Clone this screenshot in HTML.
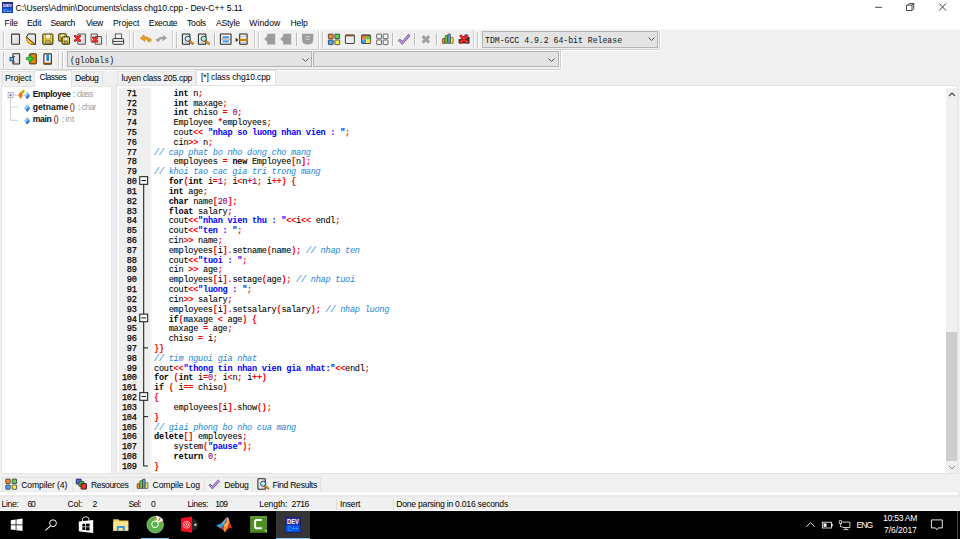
<!DOCTYPE html>
<html><head><meta charset="utf-8"><title>Dev-C++</title>
<style>
html,body{margin:0;padding:0}
body{width:960px;height:539px;position:relative;overflow:hidden;background:#f0f0f0;font-family:"Liberation Sans",sans-serif}
.t{position:absolute;white-space:pre;margin:0;padding:0}
.b{position:absolute;box-sizing:border-box}
.m{font-family:"Liberation Mono",monospace}
svg{position:absolute;overflow:visible}
.cl{position:absolute;left:154px;white-space:pre;font-family:"Liberation Mono",monospace;font-size:8.6px;letter-spacing:-0.26px;height:9.817px;line-height:9.817px;color:#000;-webkit-text-stroke:0.08px #000}
.ln{position:absolute;left:119px;width:17.6px;text-align:right;white-space:pre;font-family:"Liberation Mono",monospace;font-size:8.6px;letter-spacing:-0.26px;height:9.817px;line-height:9.817px;color:#000;-webkit-text-stroke:0.25px #000}
.k{font-weight:bold;-webkit-text-stroke:0}
.s{color:#ff0000;font-weight:bold;-webkit-text-stroke:0}
.q{color:#0000ff;font-weight:bold;-webkit-text-stroke:0}
.n{color:#800080;-webkit-text-stroke:0.08px #800080}
.c{color:#1a86e0;font-style:italic;-webkit-text-stroke:0}
</style></head><body>
<div class="b" style="left:0px;top:0px;width:960px;height:28.5px;background:#ffffff;"></div>
<svg style="left:1.5px;top:2px" width="11" height="11" viewBox="0 0 11 11"><rect width="11" height="11" fill="#1a1f6a"/><rect x="0.5" y="0.5" width="10" height="5" fill="#2a3596"/><rect x="0.5" y="5.5" width="10" height="5" fill="#0a58e0"/><text x="5.5" y="4.6" font-family="Liberation Sans, sans-serif" font-weight="bold" font-size="4.4" fill="#fff" text-anchor="middle">DEV</text><text x="5.5" y="9.6" font-family="Liberation Sans, sans-serif" font-weight="bold" font-size="4.4" fill="#8fd0ff" text-anchor="middle">C++</text></svg>
<div class="t " style="left:15.60px;top:3px;font-size:8.6px;color:#000;letter-spacing:-0.065px;">C:\Users\Admin\Documents\class chg10.cpp - Dev-C++ 5.11</div>
<svg style="left:870px;top:0" width="90" height="16" viewBox="0 0 90 16"><path d="M5.1 7.3h7" stroke="#1a1a1a" stroke-width="0.8" fill="none"/><path d="M36.5 5.2h5.5v5.300h-5.500zM37.900 5.200l1.300-1.700h4.500v5.300l-1.700 1.700M43.700 3.500l-1.700 1.700" stroke="#1a1a1a" stroke-width="0.8" fill="none"/><path d="M69.100 3.300l7 7.400M76.100 3.300l-7 7.400" stroke="#1a1a1a" stroke-width="0.8" fill="none"/></svg>
<div class="t " style="left:4.60px;top:18px;font-size:8.6px;color:#000;letter-spacing:-0.119px;">File</div>
<div class="t " style="left:27.10px;top:18px;font-size:8.6px;color:#000;letter-spacing:-0.207px;">Edit</div>
<div class="t " style="left:50.60px;top:18px;font-size:8.6px;color:#000;letter-spacing:-0.510px;">Search</div>
<div class="t " style="left:85.90px;top:18px;font-size:8.6px;color:#000;letter-spacing:-0.362px;">View</div>
<div class="t " style="left:112.90px;top:18px;font-size:8.6px;color:#000;letter-spacing:-0.028px;">Project</div>
<div class="t " style="left:148.80px;top:18px;font-size:8.6px;color:#000;letter-spacing:-0.396px;">Execute</div>
<div class="t " style="left:187.10px;top:18px;font-size:8.6px;color:#000;letter-spacing:-0.269px;">Tools</div>
<div class="t " style="left:215.90px;top:18px;font-size:8.6px;color:#000;letter-spacing:-0.151px;">AStyle</div>
<div class="t " style="left:249.30px;top:18px;font-size:8.6px;color:#000;letter-spacing:0.082px;">Window</div>
<div class="t " style="left:290.40px;top:18px;font-size:8.6px;color:#000;letter-spacing:-0.096px;">Help</div>
<div class="b" style="left:0px;top:28.5px;width:960px;height:1.2px;background:#f8f8f8;"></div>
<div class="b" style="left:0px;top:48.5px;width:659px;height:1px;background:#d0d0d0;"></div>
<div class="b" style="left:0px;top:49.5px;width:659px;height:1px;background:#ffffff;"></div>
<div class="b" style="left:0px;top:68.5px;width:560px;height:1px;background:#d0d0d0;"></div>
<div class="b" style="left:0px;top:69.5px;width:560px;height:1px;background:#ffffff;"></div>
<div class="b" style="left:3px;top:31.5px;width:1px;height:16.5px;background:#c4c4c4;"></div>
<div class="b" style="left:4px;top:31.5px;width:1px;height:16.5px;background:#ffffff;"></div>
<div class="b" style="left:133px;top:31.5px;width:1px;height:16.5px;background:#c4c4c4;"></div>
<div class="b" style="left:134px;top:31.5px;width:1px;height:16.5px;background:#ffffff;"></div>
<div class="b" style="left:175.5px;top:31.5px;width:1px;height:16.5px;background:#c4c4c4;"></div>
<div class="b" style="left:176.5px;top:31.5px;width:1px;height:16.5px;background:#ffffff;"></div>
<div class="b" style="left:258px;top:31.5px;width:1px;height:16.5px;background:#c4c4c4;"></div>
<div class="b" style="left:259px;top:31.5px;width:1px;height:16.5px;background:#ffffff;"></div>
<div class="b" style="left:322px;top:31.5px;width:1px;height:16.5px;background:#c4c4c4;"></div>
<div class="b" style="left:323px;top:31.5px;width:1px;height:16.5px;background:#ffffff;"></div>
<div class="b" style="left:477px;top:31.5px;width:1px;height:16.5px;background:#c4c4c4;"></div>
<div class="b" style="left:478px;top:31.5px;width:1px;height:16.5px;background:#ffffff;"></div>
<div class="b" style="left:129px;top:29.5px;width:1px;height:19px;background:#d0d0d0;"></div>
<div class="b" style="left:130px;top:29.5px;width:1px;height:19px;background:#ffffff;"></div>
<div class="b" style="left:171.5px;top:29.5px;width:1px;height:19px;background:#d0d0d0;"></div>
<div class="b" style="left:172.5px;top:29.5px;width:1px;height:19px;background:#ffffff;"></div>
<div class="b" style="left:253.5px;top:29.5px;width:1px;height:19px;background:#d0d0d0;"></div>
<div class="b" style="left:254.5px;top:29.5px;width:1px;height:19px;background:#ffffff;"></div>
<div class="b" style="left:318px;top:29.5px;width:1px;height:19px;background:#d0d0d0;"></div>
<div class="b" style="left:319px;top:29.5px;width:1px;height:19px;background:#ffffff;"></div>
<div class="b" style="left:473px;top:29.5px;width:1px;height:19px;background:#d0d0d0;"></div>
<div class="b" style="left:474px;top:29.5px;width:1px;height:19px;background:#ffffff;"></div>
<div class="b" style="left:659px;top:29.5px;width:1px;height:19px;background:#d0d0d0;"></div>
<div class="b" style="left:660px;top:29.5px;width:1px;height:19px;background:#ffffff;"></div>
<div class="b" style="left:106px;top:33px;width:1px;height:13px;background:#b8b8b8;"></div>
<div class="b" style="left:107px;top:33px;width:1px;height:13px;background:#ffffff;"></div>
<div class="b" style="left:214px;top:33px;width:1px;height:13px;background:#b8b8b8;"></div>
<div class="b" style="left:215px;top:33px;width:1px;height:13px;background:#ffffff;"></div>
<div class="b" style="left:296.3px;top:33px;width:1px;height:13px;background:#b8b8b8;"></div>
<div class="b" style="left:297.3px;top:33px;width:1px;height:13px;background:#ffffff;"></div>
<div class="b" style="left:392.3px;top:33px;width:1px;height:13px;background:#b8b8b8;"></div>
<div class="b" style="left:393.3px;top:33px;width:1px;height:13px;background:#ffffff;"></div>
<div class="b" style="left:414.4px;top:33px;width:1px;height:13px;background:#b8b8b8;"></div>
<div class="b" style="left:415.4px;top:33px;width:1px;height:13px;background:#ffffff;"></div>
<div class="b" style="left:436px;top:33px;width:1px;height:13px;background:#b8b8b8;"></div>
<div class="b" style="left:437px;top:33px;width:1px;height:13px;background:#ffffff;"></div>
<div class="b" style="left:3px;top:51.5px;width:1px;height:16.5px;background:#c4c4c4;"></div>
<div class="b" style="left:4px;top:51.5px;width:1px;height:16.5px;background:#ffffff;"></div>
<div class="b" style="left:62.3px;top:51.5px;width:1px;height:16.5px;background:#c4c4c4;"></div>
<div class="b" style="left:63.3px;top:51.5px;width:1px;height:16.5px;background:#ffffff;"></div>
<div class="b" style="left:58px;top:49.5px;width:1px;height:19px;background:#d0d0d0;"></div>
<div class="b" style="left:59px;top:49.5px;width:1px;height:19px;background:#ffffff;"></div>
<div class="b" style="left:560px;top:49.5px;width:1px;height:19px;background:#d0d0d0;"></div>
<div class="b" style="left:561px;top:49.5px;width:1px;height:19px;background:#ffffff;"></div>
<svg style="left:0;top:28px" width="480" height="42" viewBox="0 28 480 42"><defs><linearGradient id="pg" x1="0" y1="0" x2="1" y2="1"><stop offset="0" stop-color="#f4f4f4"/><stop offset="1" stop-color="#d6d6d6"/></linearGradient><linearGradient id="yl" x1="0" y1="0" x2="0" y2="1"><stop offset="0" stop-color="#fff04a"/><stop offset="1" stop-color="#d8b400"/></linearGradient></defs><rect x="11.6" y="34.1" width="7.9" height="10.2" rx="0.5" fill="url(#pg)" stroke="#363636" stroke-width="1.05"/><path d="M28 34h7.500v10.400h-4.500l-4.600-6.800z" fill="url(#pg)" stroke="#2a2a2a" stroke-width="1"/><path d="M26.300 37q-1 7.800 8.600 7.600z" fill="#f6a81c" stroke="#b8720c" stroke-width="0.5"/><path d="M27.800 39.500q0.600 3.600 4.400 4.200z" fill="#ffd84a"/><path d="M26.400 36.900l8.700 7.500" stroke="#262626" stroke-width="0.9"/><rect x="42.8" y="34.1" width="10.1" height="10.2" rx="0.5" fill="url(#yl)" stroke="#2e2600" stroke-width="1"/><rect x="45.53" y="34.6" width="4.65" height="4.28" fill="#f4f4f4" stroke="#6a5a10" stroke-width="0.4"/><rect x="45.83" y="40.83" width="4.44" height="3.07" fill="#a8a8a8" stroke="#4a3c00" stroke-width="0.4"/><rect x="58.7" y="33.8" width="7.6" height="7.3" rx="0.5" fill="url(#yl)" stroke="#2e2600" stroke-width="1"/><rect x="60.75" y="34.3" width="3.50" height="3.07" fill="#f4f4f4" stroke="#6a5a10" stroke-width="0.4"/><rect x="60.98" y="38.62" width="3.34" height="2.08" fill="#a8a8a8" stroke="#4a3c00" stroke-width="0.4"/><rect x="62.1" y="36.8" width="7.4" height="7.4" rx="0.5" fill="url(#yl)" stroke="#2e2600" stroke-width="1"/><rect x="64.10" y="37.3" width="3.40" height="3.11" fill="#f4f4f4" stroke="#6a5a10" stroke-width="0.4"/><rect x="64.32" y="41.68" width="3.26" height="2.12" fill="#a8a8a8" stroke="#4a3c00" stroke-width="0.4"/><rect x="77.8" y="33.9" width="7.6" height="10.3" rx="0.5" fill="url(#pg)" stroke="#5a5a5a" stroke-width="1.05"/><path d="M75.2 36.1L79.8 40.699999999999996M79.8 36.1L75.2 40.699999999999996" stroke="#8a0a0a" stroke-width="2.4" stroke-linecap="round"/><path d="M75.2 36.1L79.8 40.699999999999996M79.8 36.1L75.2 40.699999999999996" stroke="#ff2a2a" stroke-width="1.7" stroke-linecap="round"/><rect x="91.1" y="33.9" width="6.3" height="8" rx="0.5" fill="url(#pg)" stroke="#5a5a5a" stroke-width="1.05"/><rect x="95.2" y="36.4" width="6.4" height="7.8" rx="0.5" fill="url(#pg)" stroke="#5a5a5a" stroke-width="1.05"/><path d="M93.19999999999999 37.6L97.0 41.4M97.0 37.6L93.19999999999999 41.4" stroke="#8a0a0a" stroke-width="2.3" stroke-linecap="round"/><path d="M93.19999999999999 37.6L97.0 41.4M97.0 37.6L93.19999999999999 41.4" stroke="#ff2a2a" stroke-width="1.6" stroke-linecap="round"/><rect x="115.3" y="33.9" width="6.2" height="5" fill="#f2f2f2" stroke="#3a3a3a" stroke-width="0.8"/><rect x="112.8" y="38.6" width="10.8" height="5.7" rx="0.8" fill="#f6f6f6" stroke="#2e2e2e" stroke-width="1"/><path d="M113 41.4h10.4" stroke="#2e2e2e" stroke-width="0.9"/><path d="M140.2 38.2l3.6-3.2l0.7 1.9q3-0.3 4.6 1.6q2.2-0.2 2.2 1.5q0 1.7-2.1 1.7q-1.7 0-2-1.7q-1-1.2-2.6-0.9l0.4 2.2z" fill="#f2a21a" stroke="#a86208" stroke-width="0.5"/><path d="M167 38.2l-3.6-3.2l-0.7 1.9q-3-0.3-4.6 1.6q-2.2-0.2-2.2 1.5q0 1.7 2.1 1.7q1.700 0 2-1.700q1-1.200 2.600-0.900l-0.400 2.200z" fill="#a2a2a2"/><rect x="182.4" y="33.9" width="7.4" height="10.4" rx="0.5" fill="url(#pg)" stroke="#262626" stroke-width="1.05"/><path d="M189.2 40.6l3.6 3" stroke="#7a4a00" stroke-width="2.1" stroke-linecap="round"/><path d="M189.4 40.8l3.3 2.7" stroke="#f0a020" stroke-width="1.1" stroke-linecap="round"/><circle cx="187.7" cy="38.8" r="2.6" fill="#bfeeff" stroke="#1e2e48" stroke-width="0.9"/><rect x="198.4" y="33.9" width="7.4" height="10.4" rx="0.5" fill="url(#pg)" stroke="#262626" stroke-width="1.05"/><path d="M205.2 40.6l3.6 3" stroke="#7a4a00" stroke-width="2.1" stroke-linecap="round"/><path d="M205.4 40.8l3.3 2.7" stroke="#f0a020" stroke-width="1.1" stroke-linecap="round"/><circle cx="203.7" cy="38.8" r="2.6" fill="#aef2cf" stroke="#1e2e48" stroke-width="0.9"/><rect x="220.4" y="33.9" width="10.6" height="10.4" rx="0.6" fill="#f4f4f4" stroke="#222" stroke-width="1.05"/><path d="M220.4 39.1h10.6" stroke="#555" stroke-width="0.5"/><rect x="222.6" y="36.2" width="6.3" height="2.1" fill="#4a98ec"/><rect x="222.6" y="40.3" width="6.3" height="2.1" fill="#4a98ec"/><rect x="239.7" y="33.9" width="7.4" height="10.4" rx="0.6" fill="#f8f8f8" stroke="#222" stroke-width="1.05"/><path d="M239.7 36.6h7.4M239.7 42.6h7.4" stroke="#777" stroke-width="0.4"/><rect x="239.4" y="38.7" width="8.1" height="2.4" fill="#c8860a"/><path d="M235.700 37.700l2.800 2.200l-2.800 2.200z" fill="#3a2a10"/><path d="M264.2 39l3-3v-2.300h8v10.800h-8v-2.500z" fill="#9c9c9c"/><path d="M280.2 39l3-3v-2.300h8v10.800h-8v-2.500z" fill="#9c9c9c"/><path d="M302 33.700h11.300v5.500q0 5.300-5.650 5.300q-5.650 0-5.650-5.300z" fill="#9c9c9c"/><path d="M305.600 36.700h4.400M305.600 39.200h4.400" stroke="#d4d4d4" stroke-width="1"/><rect x="328.4" y="34.1" width="4.8" height="4.6" rx="0.5" fill="#f58a2a" stroke="#333" stroke-width="0.8"/><rect x="334.9" y="34.1" width="4.8" height="4.6" rx="0.5" fill="#5cd04a" stroke="#333" stroke-width="0.8"/><rect x="328.4" y="40" width="4.8" height="4.6" rx="0.5" fill="#4aa2f4" stroke="#333" stroke-width="0.8"/><rect x="334.9" y="40" width="4.8" height="4.6" rx="0.5" fill="#f4ee4a" stroke="#333" stroke-width="0.8"/><rect x="345.4" y="34.900" width="9" height="8.600" rx="0.5" fill="#ececec" stroke="#2e2e2e" stroke-width="0.9"/><path d="M345.400 35.700h9" stroke="#8a4a12" stroke-width="1.300"/><rect x="361.6" y="34.900" width="9" height="8.600" rx="0.5" fill="#eee" stroke="#2e2e2e" stroke-width="0.9"/><rect x="362" y="36.300" width="4.100" height="3.300" fill="#f5822a"/><rect x="366.100" y="36.300" width="4.100" height="3.300" fill="#52c84a"/><rect x="362" y="39.600" width="4.100" height="3.500" fill="#3e9af2"/><rect x="366.100" y="39.600" width="4.100" height="3.500" fill="#f2ea42"/><path d="M361.600 35.700h9" stroke="#8a4a12" stroke-width="1.300"/><rect x="376.7" y="34.1" width="4.8" height="4.6" rx="0.5" fill="#f2f2f2" stroke="#444" stroke-width="0.8"/><rect x="383.2" y="34.1" width="4.8" height="4.6" rx="0.5" fill="#f2f2f2" stroke="#444" stroke-width="0.8"/><rect x="376.7" y="40" width="4.8" height="4.6" rx="0.5" fill="#f2f2f2" stroke="#444" stroke-width="0.8"/><rect x="383.2" y="40" width="4.8" height="4.6" rx="0.5" fill="#f2f2f2" stroke="#444" stroke-width="0.8"/><path d="M398.90 39.70l3.30 3.30l7.30 -8.10" fill="none" stroke="#4a3470" stroke-width="2.50" stroke-linejoin="miter"/><path d="M398.90 39.70l3.30 3.30l7.30 -8.10" fill="none" stroke="#c9a4f6" stroke-width="1.30" stroke-linejoin="miter"/><path d="M422.600 36.200l6.600 6.400M429.200 36.200l-6.600 6.400" stroke="#a2a2a2" stroke-width="3.100"/><rect x="442.40" y="38.50" width="2.700" height="4.90" rx="0.6" fill="#f58a2a" stroke="#3a2a10" stroke-width="0.6"/><rect x="445.10" y="35.60" width="2.700" height="7.80" rx="0.6" fill="#5cd04a" stroke="#3a2a10" stroke-width="0.6"/><rect x="447.80" y="34.00" width="2.700" height="9.40" rx="0.6" fill="#4aa2f4" stroke="#3a2a10" stroke-width="0.6"/><rect x="450.50" y="37.50" width="2.700" height="5.90" rx="0.6" fill="#f4e84a" stroke="#3a2a10" stroke-width="0.6"/><path d="M458.600 43.400v-4.500h2.500v-2.600h3.400v-1.800h2.600v2.600h2.500v6.300z" fill="#3a3a3a"/><path d="M460.9 36.0L467.1 42.2M467.1 36.0L460.9 42.2" stroke="#8a0a0a" stroke-width="2.8" stroke-linecap="round"/><path d="M460.9 36.0L467.1 42.2M467.1 36.0L460.9 42.2" stroke="#ff2a2a" stroke-width="2.1" stroke-linecap="round"/><rect x="12.9" y="53.8" width="6.7" height="10.1" rx="0.5" fill="url(#pg)" stroke="#262626" stroke-width="1.05"/><path d="M12.900 56.500h2.200M12.900 62h2.200" stroke="#3a3a3a" stroke-width="0.8"/><rect x="10" y="57.400" width="3.700" height="3.500" fill="#6ab2f6" stroke="#1a3a6a" stroke-width="0.8"/><rect x="29.600" y="53.800" width="6.700" height="10.100" rx="0.5" fill="#dc8a0a" stroke="#4a2a00" stroke-width="1"/><path d="M27.300 58.600h5.200M29.900 56.200v4.800" stroke="#0a6a0a" stroke-width="2.900" stroke-linecap="round"/><path d="M27.400 58.600h5M29.900 56.300v4.600" stroke="#36e036" stroke-width="1.600" stroke-linecap="round"/><rect x="43.900" y="53.800" width="7.500" height="10.300" rx="0.6" fill="#fafafa" stroke="#5a340a" stroke-width="1.200"/><path d="M43.900 63.300h7.500" stroke="#8a5210" stroke-width="1.500"/><rect x="46.300" y="54.300" width="2.900" height="6.700" fill="#1a88e0"/></svg>
<div class="b" style="left:482px;top:31px;width:176px;height:16.5px;background:#e3e3e3;border:1px solid #b4b4b4;"></div>
<svg style="left:647.5px;top:37.45px" width="7" height="4" viewBox="0 0 7 4"><path d="M0.5 0.5l3 3l3-3" stroke="#444" stroke-width="0.9" fill="none"/></svg>
<div class="t m" style="left:485px;top:35.85px;font-size:8.17px;line-height:10px;color:#161616;">TDM-GCC 4.9.2 64-bit Release</div>
<div class="b" style="left:67px;top:51.3px;width:245px;height:16px;background:#e3e3e3;border:1px solid #b4b4b4;"></div>
<svg style="left:301.5px;top:57.5px" width="7" height="4" viewBox="0 0 7 4"><path d="M0.5 0.5l3 3l3-3" stroke="#444" stroke-width="0.9" fill="none"/></svg>
<div class="t m" style="left:70px;top:55.90px;font-size:8.17px;line-height:10px;color:#161616;">(globals)</div>
<div class="b" style="left:312.8px;top:51.3px;width:245.8px;height:16px;background:#e3e3e3;border:1px solid #b4b4b4;"></div>
<svg style="left:548.1px;top:57.5px" width="7" height="4" viewBox="0 0 7 4"><path d="M0.5 0.5l3 3l3-3" stroke="#444" stroke-width="0.9" fill="none"/></svg>
<div class="b" style="left:1px;top:85.6px;width:111.3px;height:388.6px;background:#ffffff;border:1px solid #e6e6e6;"></div>
<div class="b" style="left:1.5px;top:70.9px;width:33.4px;height:15px;background:#f0f0f0;border:1px solid #e2e2e2;border-bottom:none;"></div>
<div class="b" style="left:71px;top:70.9px;width:32px;height:15px;background:#f0f0f0;border:1px solid #e2e2e2;border-bottom:none;"></div>
<div class="b" style="left:34.4px;top:69.6px;width:37.2px;height:17px;background:#ffffff;border:1px solid #e2e2e2;border-bottom:none;"></div>
<div class="t " style="left:5.10px;top:73px;font-size:8.6px;color:#000;letter-spacing:-0.094px;">Project</div>
<div class="t " style="left:39.60px;top:72px;font-size:8.6px;color:#000;letter-spacing:-0.565px;">Classes</div>
<div class="t " style="left:75.10px;top:73px;font-size:8.6px;color:#000;letter-spacing:-0.411px;">Debug</div>
<svg style="left:0;top:84px" width="112" height="50" viewBox="0 0 112 50"><g stroke="#bcbcbc" stroke-width="0.7" fill="none"><path d="M10.6 13.8v22.5"/><path d="M10.6 23.1h7.5"/><path d="M10.6 36.3h7.5"/><path d="M13.1 11.1h5"/></g><rect x="8.1" y="8.5" width="5" height="5.3" fill="#fff" stroke="#9a9a9a" stroke-width="0.7"/><path d="M9.3 11.15h2.6M10.6 9.8v2.7" stroke="#3a5fa8" stroke-width="0.8"/><path d="M20.6 7.5l2.5 3.7l-2.5 3.8l-2.5-3.8z" fill="#f07a1a"/><path d="M23.1 5l2.5 2.8l-2.5 2.8l-2.5-2.8z" fill="#f4e53a"/><path d="M21.7 9.3l2.2-2.8" stroke="#333" stroke-width="0.8"/><path d="M27.2 7.9l2.900 3.600l-2.900 3.600l-2.900-3.600z" fill="#4a9af4"/><path d="M27.2 7.9l-2.900 3.600l1.300 1.600l3.300-4.100z" fill="#9ad0fc"/><path d="M30.099999999999998 11.5l-2.900 3.600l-1.400-1.700z" fill="#1a62d0"/><path d="M27.2 20.5l2.900 3.600l-2.900 3.600l-2.900-3.600z" fill="#4a9af4"/><path d="M27.2 20.5l-2.900 3.600l1.300 1.600l3.300-4.100z" fill="#9ad0fc"/><path d="M30.099999999999998 24.1l-2.900 3.600l-1.400-1.700z" fill="#1a62d0"/><path d="M27.2 33.1l2.900 3.600l-2.900 3.600l-2.900-3.600z" fill="#4a9af4"/><path d="M27.2 33.1l-2.900 3.600l1.300 1.600l3.300-4.100z" fill="#9ad0fc"/><path d="M30.099999999999998 36.7l-2.900 3.600l-1.400-1.700z" fill="#1a62d0"/></svg>
<div class="t " style="left:32.70px;top:89px;font-size:8.6px;color:#111;letter-spacing:-0.347px;font-weight:bold;">Employee</div>
<div class="t " style="left:72.70px;top:89px;font-size:8.6px;color:#8a8a8a;">:</div>
<div class="t " style="left:76.85px;top:89px;font-size:8.6px;color:#a0a0a0;letter-spacing:-0.773px;">class</div>
<div class="t " style="left:32.70px;top:102px;font-size:8.6px;color:#111;letter-spacing:0.056px;font-weight:bold;">getname</div>
<div class="t " style="left:69.50px;top:102px;font-size:9px;color:#7a1010;letter-spacing:-0.395px;">()</div>
<div class="t " style="left:78.10px;top:102px;font-size:8.6px;color:#8a8a8a;">:</div>
<div class="t " style="left:81.50px;top:102px;font-size:8.6px;color:#a0a0a0;letter-spacing:-0.577px;">char</div>
<div class="t " style="left:32.70px;top:114px;font-size:8.6px;color:#111;letter-spacing:-0.324px;font-weight:bold;">main</div>
<div class="t " style="left:53.50px;top:114px;font-size:9px;color:#7a1010;letter-spacing:-0.695px;">()</div>
<div class="t " style="left:61.70px;top:114px;font-size:8.6px;color:#8a8a8a;">:</div>
<div class="t " style="left:65.20px;top:114px;font-size:8.6px;color:#a0a0a0;letter-spacing:0.008px;">int</div>
<div class="b" style="left:112.3px;top:85px;width:4px;height:389.5px;background:#ececec;"></div>
<div class="b" style="left:117.4px;top:71px;width:78.6px;height:14.6px;background:#f0f0f0;border:1px solid #e2e2e2;border-bottom:none;"></div>
<div class="b" style="left:195.8px;top:69.6px;width:80.4px;height:17px;background:#ffffff;border:1px solid #e2e2e2;border-bottom:none;"></div>
<div class="t " style="left:121.50px;top:73px;font-size:8.6px;color:#000;letter-spacing:-0.263px;">luyen class 205.cpp</div>
<div class="t " style="left:201.10px;top:72px;font-size:8.6px;color:#000;letter-spacing:-0.144px;">[*] class chg10.cpp</div>
<div class="b" style="left:116.3px;top:85.4px;width:842.2px;height:389px;background:#ffffff;border:1px solid #e4e4e4;"></div>
<div class="b" style="left:118.9px;top:87.9px;width:33.4px;height:385px;background:linear-gradient(to right,#efefef 0,#efefef 31px,#ffffff 33.4px);"></div>
<div class="ln" style="top:89.75px">71</div><div class="cl" style="top:89.75px">    <span class="k">int</span> n<span class="s">;</span></div>
<div class="ln" style="top:99.57px">72</div><div class="cl" style="top:99.57px">    <span class="k">int</span> maxage<span class="s">;</span></div>
<div class="ln" style="top:109.38px">73</div><div class="cl" style="top:109.38px">    <span class="k">int</span> chiso <span class="s">=</span> <span class="n">0</span><span class="s">;</span></div>
<div class="ln" style="top:119.20px">74</div><div class="cl" style="top:119.20px">    Employee <span class="s">*</span>employees<span class="s">;</span></div>
<div class="ln" style="top:129.02px">75</div><div class="cl" style="top:129.02px">    cout<span class="s">&lt;</span><span class="s">&lt;</span> <span class="q">&quot;nhap so luong nhan vien : &quot;</span><span class="s">;</span></div>
<div class="ln" style="top:138.84px">76</div><div class="cl" style="top:138.84px">    cin<span class="s">&gt;</span><span class="s">&gt;</span> n<span class="s">;</span></div>
<div class="ln" style="top:148.65px">77</div><div class="cl" style="top:148.65px"><span class="c">// cap phat bo nho dong cho mang</span></div>
<div class="ln" style="top:158.47px">78</div><div class="cl" style="top:158.47px">    employees <span class="s">=</span> <span class="k">new</span> Employee<span class="s">[</span>n<span class="s">]</span><span class="s">;</span></div>
<div class="ln" style="top:168.29px">79</div><div class="cl" style="top:168.29px"><span class="c">// khoi tao cac gia tri trong mang</span></div>
<div class="ln" style="top:178.10px">80</div><div class="cl" style="top:178.10px">   <span class="k">for</span><span class="s">(</span><span class="k">int</span> i<span class="s">=</span><span class="n">1</span><span class="s">;</span> i<span class="s">&lt;</span>n<span class="s">+</span><span class="n">1</span><span class="s">;</span> i<span class="s">+</span><span class="s">+</span><span class="s">)</span> <span class="s">{</span></div>
<div class="ln" style="top:187.92px">81</div><div class="cl" style="top:187.92px">   <span class="k">int</span> age<span class="s">;</span></div>
<div class="ln" style="top:197.74px">82</div><div class="cl" style="top:197.74px">   <span class="k">char</span> name<span class="s">[</span><span class="n">20</span><span class="s">]</span><span class="s">;</span></div>
<div class="ln" style="top:207.55px">83</div><div class="cl" style="top:207.55px">   <span class="k">float</span> salary<span class="s">;</span></div>
<div class="ln" style="top:217.37px">84</div><div class="cl" style="top:217.37px">   cout<span class="s">&lt;</span><span class="s">&lt;</span><span class="q">&quot;nhan vien thu : &quot;</span><span class="s">&lt;</span><span class="s">&lt;</span>i<span class="s">&lt;</span><span class="s">&lt;</span> endl<span class="s">;</span></div>
<div class="ln" style="top:227.19px">85</div><div class="cl" style="top:227.19px">   cout<span class="s">&lt;</span><span class="s">&lt;</span><span class="q">&quot;ten : &quot;</span><span class="s">;</span></div>
<div class="ln" style="top:237.00px">86</div><div class="cl" style="top:237.00px">   cin<span class="s">&gt;</span><span class="s">&gt;</span> name<span class="s">;</span></div>
<div class="ln" style="top:246.82px">87</div><div class="cl" style="top:246.82px">   employees<span class="s">[</span>i<span class="s">]</span><span class="s">.</span>setname<span class="s">(</span>name<span class="s">)</span><span class="s">;</span> <span class="c">// nhap ten</span></div>
<div class="ln" style="top:256.64px">88</div><div class="cl" style="top:256.64px">   cout<span class="s">&lt;</span><span class="s">&lt;</span><span class="q">&quot;tuoi : &quot;</span><span class="s">;</span></div>
<div class="ln" style="top:266.46px">89</div><div class="cl" style="top:266.46px">   cin <span class="s">&gt;</span><span class="s">&gt;</span> age<span class="s">;</span></div>
<div class="ln" style="top:276.27px">90</div><div class="cl" style="top:276.27px">   employees<span class="s">[</span>i<span class="s">]</span><span class="s">.</span>setage<span class="s">(</span>age<span class="s">)</span><span class="s">;</span> <span class="c">// nhap tuoi</span></div>
<div class="ln" style="top:286.09px">91</div><div class="cl" style="top:286.09px">   cout<span class="s">&lt;</span><span class="s">&lt;</span><span class="q">&quot;luong : &quot;</span><span class="s">;</span></div>
<div class="ln" style="top:295.91px">92</div><div class="cl" style="top:295.91px">   cin<span class="s">&gt;</span><span class="s">&gt;</span> salary<span class="s">;</span></div>
<div class="ln" style="top:305.72px">93</div><div class="cl" style="top:305.72px">   employees<span class="s">[</span>i<span class="s">]</span><span class="s">.</span>setsalary<span class="s">(</span>salary<span class="s">)</span><span class="s">;</span> <span class="c">// nhap luong</span></div>
<div class="ln" style="top:315.54px">94</div><div class="cl" style="top:315.54px">   <span class="k">if</span><span class="s">(</span>maxage <span class="s">&lt;</span> age<span class="s">)</span> <span class="s">{</span></div>
<div class="ln" style="top:325.36px">95</div><div class="cl" style="top:325.36px">   maxage <span class="s">=</span> age<span class="s">;</span></div>
<div class="ln" style="top:335.18px">96</div><div class="cl" style="top:335.18px">   chiso <span class="s">=</span> i<span class="s">;</span></div>
<div class="ln" style="top:344.99px">97</div><div class="cl" style="top:344.99px"><span class="s">}</span><span class="s">}</span></div>
<div class="ln" style="top:354.81px">98</div><div class="cl" style="top:354.81px"><span class="c">// tim nguoi gia nhat</span></div>
<div class="ln" style="top:364.63px">99</div><div class="cl" style="top:364.63px">cout<span class="s">&lt;</span><span class="s">&lt;</span><span class="q">&quot;thong tin nhan vien gia nhat:&quot;</span><span class="s">&lt;</span><span class="s">&lt;</span>endl<span class="s">;</span></div>
<div class="ln" style="top:374.44px">100</div><div class="cl" style="top:374.44px"><span class="k">for</span> <span class="s">(</span><span class="k">int</span> i<span class="s">=</span><span class="n">0</span><span class="s">;</span> i<span class="s">&lt;</span>n<span class="s">;</span> i<span class="s">+</span><span class="s">+</span><span class="s">)</span></div>
<div class="ln" style="top:384.26px">101</div><div class="cl" style="top:384.26px"><span class="k">if</span> <span class="s">(</span> i<span class="s">=</span><span class="s">=</span> chiso<span class="s">)</span></div>
<div class="ln" style="top:394.08px">102</div><div class="cl" style="top:394.08px"><span class="s">{</span></div>
<div class="ln" style="top:403.89px">103</div><div class="cl" style="top:403.89px">    employees<span class="s">[</span>i<span class="s">]</span><span class="s">.</span>show<span class="s">(</span><span class="s">)</span><span class="s">;</span></div>
<div class="ln" style="top:413.71px">104</div><div class="cl" style="top:413.71px"><span class="s">}</span></div>
<div class="ln" style="top:423.53px">105</div><div class="cl" style="top:423.53px"><span class="c">// giai phong bo nho cua mang</span></div>
<div class="ln" style="top:433.35px">106</div><div class="cl" style="top:433.35px"><span class="k">delete</span><span class="s">[</span><span class="s">]</span> employees<span class="s">;</span></div>
<div class="ln" style="top:443.16px">107</div><div class="cl" style="top:443.16px">    system<span class="s">(</span><span class="q">&quot;pause&quot;</span><span class="s">)</span><span class="s">;</span></div>
<div class="ln" style="top:452.98px">108</div><div class="cl" style="top:452.98px">    <span class="k">return</span> <span class="n">0</span><span class="s">;</span></div>
<div class="ln" style="top:462.80px">109</div><div class="cl" style="top:462.80px"><span class="s">}</span></div>
<svg style="left:0;top:0" width="160" height="480" viewBox="0 0 160 480"><g stroke="#1c1c1c" stroke-width="1.05" fill="none"><path d="M143.7 180.50V466.00h4.2"/><path d="M143.7 347.89h4.3"/><path d="M143.7 416.61h4.3"/><rect x="139.75" y="176.70" width="7.9" height="7.6" fill="#fff"/><path d="M141.4 180.50h4.6"/><rect x="139.75" y="314.14" width="7.9" height="7.6" fill="#fff"/><path d="M141.4 317.94h4.6"/><rect x="139.75" y="392.68" width="7.9" height="7.6" fill="#fff"/><path d="M141.4 396.48h4.6"/></g></svg>
<div class="b" style="left:945.7px;top:88px;width:11.3px;height:384.6px;background:#f0f0f0;"></div>
<div class="b" style="left:946px;top:332px;width:10.6px;height:129px;background:#cdcdcd;"></div>
<svg style="left:947.5px;top:92px" width="8" height="5" viewBox="0 0 8 5"><path d="M1 4l3-3l3 3" stroke="#404040" stroke-width="1.1" fill="none"/></svg>
<svg style="left:947.5px;top:465px" width="8" height="5" viewBox="0 0 8 5"><path d="M1 1l3 3l3-3" stroke="#808080" stroke-width="0.9" fill="none"/></svg>
<div class="b" style="left:1.5px;top:477.2px;width:71.0px;height:14.5px;background:#f0f0f0;border:1px solid #e3e3e3;border-bottom:none;"></div>
<div class="b" style="left:71.5px;top:477.2px;width:62.30000000000001px;height:14.5px;background:#f0f0f0;border:1px solid #e3e3e3;border-bottom:none;"></div>
<div class="b" style="left:132.8px;top:477.2px;width:72.19999999999999px;height:14.5px;background:#f0f0f0;border:1px solid #e3e3e3;border-bottom:none;"></div>
<div class="b" style="left:204px;top:477.2px;width:49.19999999999999px;height:14.5px;background:#f0f0f0;border:1px solid #e3e3e3;border-bottom:none;"></div>
<div class="b" style="left:252.2px;top:477.2px;width:68.60000000000002px;height:14.5px;background:#f0f0f0;border:1px solid #e3e3e3;border-bottom:none;"></div>
<div class="t " style="left:21.20px;top:480px;font-size:8.6px;color:#000;letter-spacing:-0.101px;">Compiler (4)</div>
<div class="t " style="left:91.10px;top:480px;font-size:8.6px;color:#000;letter-spacing:-0.426px;">Resources</div>
<div class="t " style="left:152.50px;top:480px;font-size:8.6px;color:#000;letter-spacing:-0.078px;">Compile Log</div>
<div class="t " style="left:224.20px;top:480px;font-size:8.6px;color:#000;letter-spacing:-0.186px;">Debug</div>
<div class="t " style="left:272.40px;top:480px;font-size:8.6px;color:#000;letter-spacing:-0.263px;">Find Results</div>
<svg style="left:0;top:474px" width="330" height="20" viewBox="0 474 330 20"><rect x="5.8" y="479.1" width="4.4" height="4.4" rx="0.5" fill="#f58a2a" stroke="#333" stroke-width="0.8"/><rect x="12.2" y="479.1" width="4.4" height="4.4" rx="0.5" fill="#5cd04a" stroke="#333" stroke-width="0.8"/><rect x="5.8" y="485" width="4.4" height="4.3" rx="0.5" fill="#4aa2f4" stroke="#333" stroke-width="0.8"/><rect x="12.2" y="485" width="4.4" height="4.3" rx="0.5" fill="#f4ee4a" stroke="#333" stroke-width="0.8"/><rect x="76.2" y="479.100" width="5" height="5" rx="0.4" fill="#6a5ae0" stroke="#221a5a" stroke-width="0.8"/><rect x="78.900" y="481.600" width="5" height="4.700" rx="0.4" fill="#3ec84a" stroke="#0e4a14" stroke-width="0.8"/><rect x="81.100" y="483.600" width="5.300" height="5.500" rx="0.4" fill="#ee3a2e" stroke="#3a0a0a" stroke-width="0.9"/><rect x="137.10" y="483.60" width="2.700" height="4.90" rx="0.6" fill="#f58a2a" stroke="#3a2a10" stroke-width="0.6"/><rect x="139.80" y="480.70" width="2.700" height="7.80" rx="0.6" fill="#5cd04a" stroke="#3a2a10" stroke-width="0.6"/><rect x="142.50" y="479.10" width="2.700" height="9.40" rx="0.6" fill="#4aa2f4" stroke="#3a2a10" stroke-width="0.6"/><rect x="145.20" y="482.60" width="2.700" height="5.90" rx="0.6" fill="#f4e84a" stroke="#3a2a10" stroke-width="0.6"/><path d="M209.39 484.56l3.04 3.04l6.72 -7.45" fill="none" stroke="#4a3470" stroke-width="2.30" stroke-linejoin="miter"/><path d="M209.39 484.56l3.04 3.04l6.72 -7.45" fill="none" stroke="#c9a4f6" stroke-width="1.20" stroke-linejoin="miter"/><g transform="translate(75.5,444.90000000000003)"><rect x="182.4" y="33.9" width="7.4" height="10.4" rx="0.5" fill="url(#pg)" stroke="#262626" stroke-width="1.05"/><path d="M189.2 40.6l3.6 3" stroke="#7a4a00" stroke-width="2.1" stroke-linecap="round"/><path d="M189.4 40.8l3.3 2.7" stroke="#f0a020" stroke-width="1.1" stroke-linecap="round"/><circle cx="187.7" cy="38.8" r="2.6" fill="#bfeeff" stroke="#1e2e48" stroke-width="0.9"/></g></svg>
<div class="b" style="left:0px;top:491.6px;width:958.6px;height:3.6px;background:#ffffff;border-right:1px solid #e3e3e3;box-shadow:0 0 0 0.6px #e6e6e6;"></div>
<div class="b" style="left:0px;top:495.4px;width:960px;height:2px;background:#e9e9e9;"></div>
<div class="b" style="left:0px;top:509.8px;width:960px;height:1.2px;background:#f9f9f9;"></div>
<div class="t " style="left:1.50px;top:499px;font-size:8.6px;color:#000;letter-spacing:-0.362px;">Line:</div>
<div class="t " style="left:27.40px;top:499px;font-size:8.6px;color:#000;letter-spacing:-1.066px;">60</div>
<div class="t " style="left:67.50px;top:499px;font-size:8.6px;color:#000;letter-spacing:-0.165px;">Col:</div>
<div class="t " style="left:92.40px;top:499px;font-size:8.6px;color:#000;letter-spacing:0.117px;">2</div>
<div class="t " style="left:128.60px;top:499px;font-size:8.6px;color:#000;letter-spacing:-0.707px;">Sel:</div>
<div class="t " style="left:151.10px;top:499px;font-size:8.6px;color:#000;letter-spacing:0.117px;">0</div>
<div class="t " style="left:187.50px;top:499px;font-size:8.6px;color:#000;letter-spacing:-0.430px;">Lines:</div>
<div class="t " style="left:215.20px;top:499px;font-size:8.6px;color:#000;letter-spacing:-0.725px;">109</div>
<div class="t " style="left:259.30px;top:499px;font-size:8.6px;color:#000;letter-spacing:-0.116px;">Length:</div>
<div class="t " style="left:291.60px;top:499px;font-size:8.6px;color:#000;letter-spacing:-0.477px;">2716</div>
<div class="t " style="left:340.00px;top:499px;font-size:8.6px;color:#000;letter-spacing:-0.202px;">Insert</div>
<div class="t " style="left:396.30px;top:499px;font-size:8.6px;color:#000;letter-spacing:-0.235px;">Done parsing in 0.016 seconds</div>
<div class="b" style="left:336.4px;top:498.5px;width:1px;height:11px;background:#dcdcdc;"></div>
<div class="b" style="left:393px;top:498.5px;width:1px;height:11px;background:#dcdcdc;"></div>
<div class="b" style="left:0px;top:511px;width:960px;height:28px;background:#000000;"></div>
<div class="b" style="left:276.2px;top:511px;width:33.7px;height:28px;background:#353535;"></div>
<div class="b" style="left:276.2px;top:537.6px;width:33.7px;height:1.4px;background:#7cc4f4;"></div>
<div class="b" style="left:141.2px;top:537.6px;width:28.1px;height:1.4px;background:#7cc4f4;"></div>
<div class="b" style="left:957px;top:511px;width:1px;height:28px;background:#4a4a4a;"></div>
<svg style="left:0;top:511px" width="960" height="28" viewBox="0 511 960 28"><g fill="#fff"><path d="M10.8 520.3l4.9-0.7v4.9h-4.9z"/><path d="M16.4 519.5l6.1-0.9v5.9h-6.1z"/><path d="M10.8 525.2h4.9v4.9l-4.9-0.7z"/><path d="M16.4 525.2h6.1v5.9l-6.1-0.9z"/></g><circle cx="53" cy="523.2" r="3.4" stroke="#fff" stroke-width="1" fill="none"/><path d="M50.6 525.8l-5.2 4.6" stroke="#fff" stroke-width="1.1"/><path d="M78.8 521.6l14.4-1.6v12.9l-14.4-1.7z" fill="#fff"/><path d="M82.5 521v-1.8q0-2.4 3.2-2.4q3.2 0 3.2 2.4v1.4" stroke="#fff" stroke-width="0.9" fill="none"/><g fill="#000"><rect x="82.3" y="523.8" width="3" height="2.8"/><rect x="86" y="523.6" width="3.6" height="3"/><rect x="82.3" y="527.2" width="3" height="2.8"/><rect x="86" y="527.2" width="3.6" height="3.2"/></g><path d="M113.3 519.2h5l1.2 1.3h8.8v10.2h-15z" fill="#f5cf5c"/><rect x="113.3" y="521.6" width="15" height="9.1" fill="#fbe38a"/><path d="M116.8 530.7v-4.6h8v4.6h-2v-2.6h-4v2.6z" fill="#2d9be8"/><circle cx="155.2" cy="524.7" r="8.3" fill="#5cb24a" stroke="#e8f4e4" stroke-width="0.5"/><path d="M155 524.3l1.200-8.500q5 0.600 7.200 4.700z" fill="#fff"/><circle cx="155" cy="524.300" r="3.300" fill="#5cb24a" stroke="#fff" stroke-width="1"/><path d="M156.100 520.600l0.500-3.300M160.300 522.800l2.300-1.400" stroke="#f0802a" stroke-width="1.100"/><path d="M158.400 520.900l1.900-3" stroke="#4aa23a" stroke-width="1.100"/><circle cx="192" cy="524.700" r="6" fill="#262626"/><circle cx="195.400" cy="524.700" r="1.300" fill="#c8c8c8"/><path d="M181 518.300l11-1.900v16.400l-11-1.800z" fill="#fb0d1b"/><circle cx="186.600" cy="524.750" r="3.500" fill="none" stroke="#ffd0d0" stroke-width="0.700"/><circle cx="186.600" cy="524.750" r="2" fill="none" stroke="#ffd0d0" stroke-width="0.800"/><circle cx="186.600" cy="524.750" r="0.700" fill="#ffd0d0"/><path d="M216.100 525.600l5-2.400l2.800 2.300l-2.700 3.300z" fill="#3a9ad8"/><path d="M221.100 523.200q2.400-1.600 4.300-4.600q0.900-1.300 1.800-1.300l-0.400 5l-2.900 3.200z" fill="#5ab4e8"/><path d="M227.200 517.300q1 0.200 2.600 5q1.500 4.400 2.800 6.700q-2.200-1.600-3.600-0.800q-2 1.400-4 4.300q-1-2.400-3.800-4l2.700-3.300z" fill="#c8321c"/><path d="M227.200 517.300q1 0.200 2.400 4.500l-2 5.700q-1.800 2.300-2.600 5q-0.400-1.800-1.600-2.600l0.600-4.600l2.800-3z" fill="#f0922a"/><path d="M227.200 517.300q0.600 0.200 1.300 2l-1.900 7l-2.600-0.800l2.800-3.200z" fill="#f8c050"/><path d="M250.100 516.200h16.900v16.800h-16.900z" fill="#4f8e22"/><path d="M250.100 516.200h16.900v2h-16.900z" fill="#62a232"/><path d="M264 530l3 3v-3z" fill="#9ad060"/><path d="M250.100 531.500h14.500l2.400 1.500h-16.900z" fill="#3a6c14"/><path d="M261.800 520.100h-5.200q-1.500 0-1.500 1.500v5.100q0 1.500 1.500 1.500h5.200" stroke="#fff" stroke-width="2" fill="none"/><rect x="285" y="516.700" width="15.900" height="16.100" rx="0.8" fill="#1c1c6a"/><rect x="285.800" y="517.500" width="14.300" height="7.300" fill="#2a2f92"/><rect x="285.800" y="524.800" width="14.300" height="7.200" fill="#0a4ee0"/><text x="287" y="524.300" font-family="Liberation Sans, sans-serif" font-weight="bold" font-size="7" fill="#fff" textLength="12" lengthAdjust="spacingAndGlyphs">DEV</text><text x="287.400" y="531" font-family="Liberation Sans, sans-serif" font-weight="bold" font-size="6.400" fill="#2a96ff" textLength="11.200" lengthAdjust="spacingAndGlyphs">C++</text><path d="M806.3 526.8l4.2-4.2l4.2 4.2" stroke="#fff" stroke-width="0.9" fill="none"/><rect x="822.3" y="522.2" width="9.2" height="5.8" stroke="#fff" stroke-width="0.8" fill="none"/><rect x="831.5" y="523.9" width="1.2" height="2.4" fill="#fff"/><rect x="823.5" y="523.4" width="3" height="3.4" fill="#fff"/><path d="M842.3 522.1h7.6v5.4h-7.6M846 527.5v2M843.5 529.6h5" stroke="#fff" stroke-width="0.8" fill="none"/><rect x="839.3" y="520.8" width="2.4" height="2.6" stroke="#fff" stroke-width="0.7" fill="none"/><path d="M840.5 523.4v3.3h1.8" stroke="#fff" stroke-width="0.7" fill="none"/><path d="M931.4 519.900h10.900v8h-4.100l-1.400 1.900l-1.400-1.900h-4z" stroke="#fff" stroke-width="0.9" fill="none"/></svg>
<div class="t " style="left:856.50px;top:520px;font-size:8.6px;color:#fff;letter-spacing:-0.968px;">ENG</div>
<div class="t " style="left:883.10px;top:513px;font-size:8.6px;color:#fff;letter-spacing:-0.291px;">10:53 AM</div>
<div class="t " style="left:884.00px;top:525px;font-size:8.6px;color:#fff;letter-spacing:-0.082px;">7/6/2017</div>
</body></html>
